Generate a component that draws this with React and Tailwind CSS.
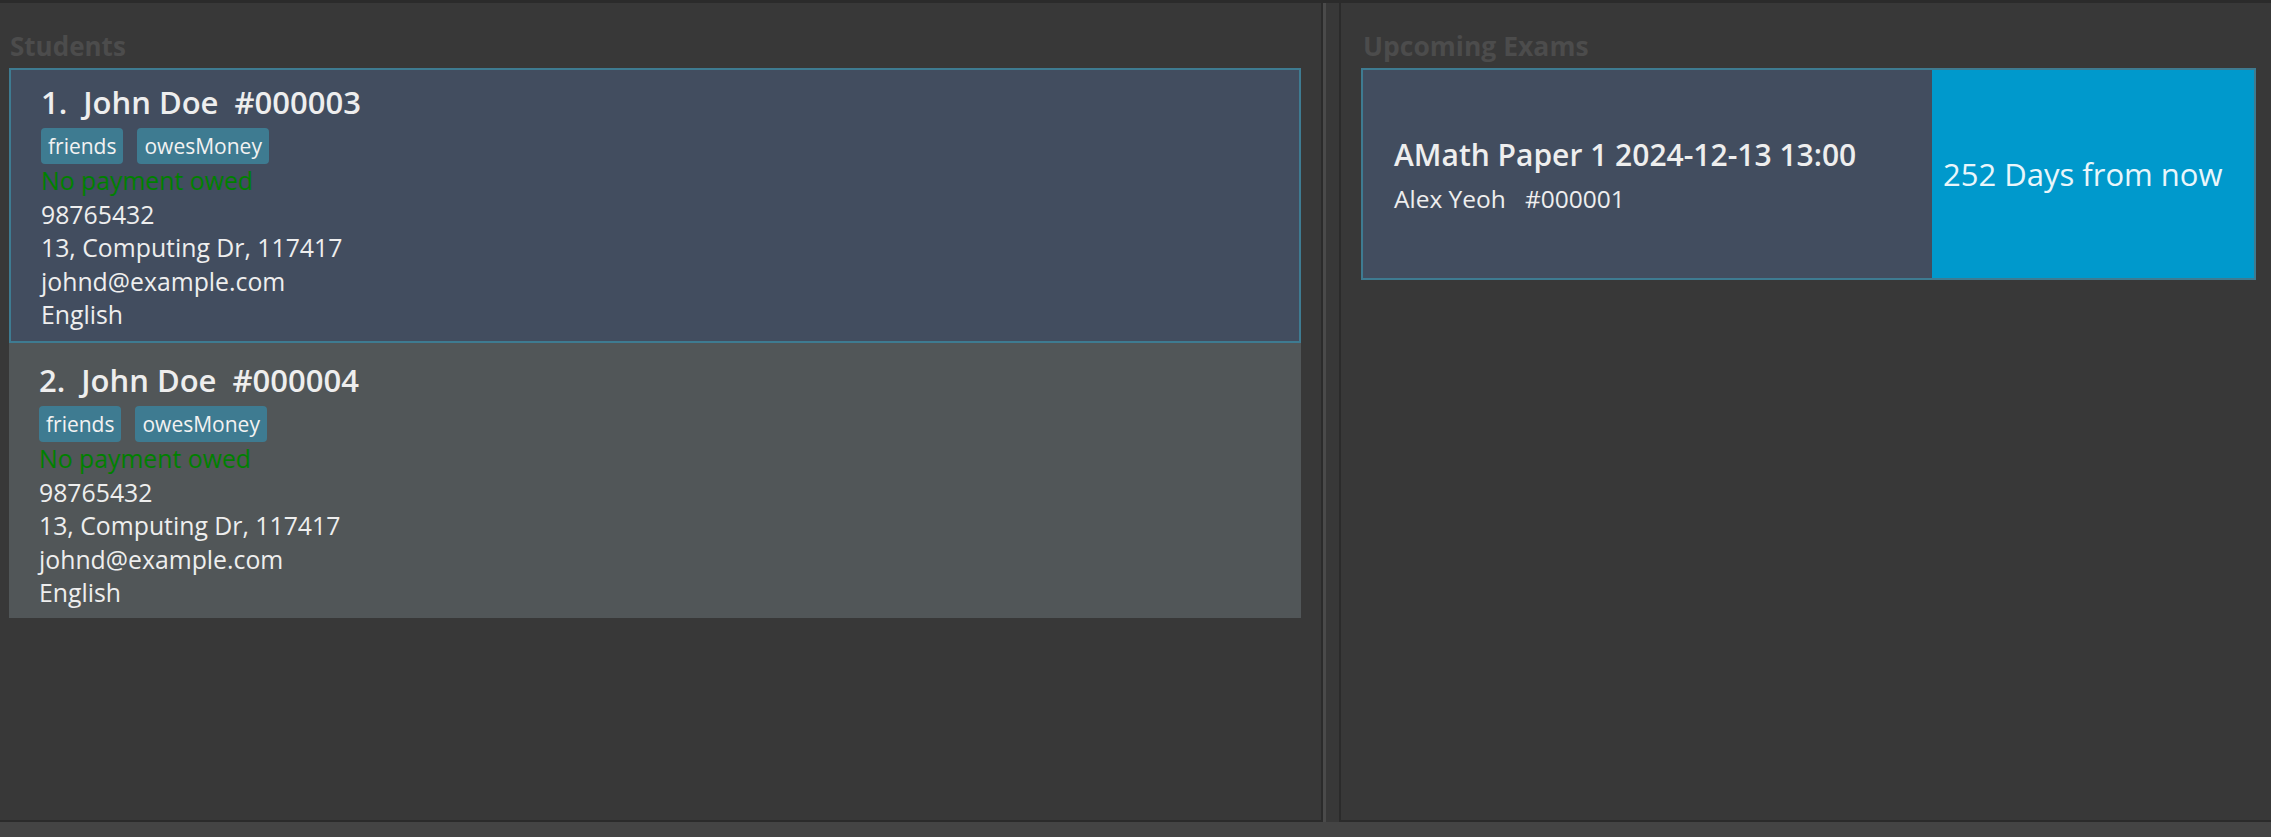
const students = [
  {
    index: 1,
    name: "John Doe",
    id: "#000003",
    tags: ["friends", "owesMoney"],
    payment: "No payment owed",
    phone: "98765432",
    address: "13, Computing Dr, 117417",
    email: "johnd@example.com",
    language: "English",
    selected: true,
  },
  {
    index: 2,
    name: "John Doe",
    id: "#000004",
    tags: ["friends", "owesMoney"],
    payment: "No payment owed",
    phone: "98765432",
    address: "13, Computing Dr, 117417",
    email: "johnd@example.com",
    language: "English",
    selected: false,
  },
];

const StudentCard = ({ student }) => (
  <div
    className={
      student.selected
        ? "h-[275px] border-2 border-[#3e7b91] bg-[#424d5f] pl-[30px] pt-[12px]"
        : "h-[275px] bg-[#515658] pl-[30px] pt-[17px]"
    }
  >
    <div className="whitespace-pre text-[31px] font-semibold leading-[40px] text-[#eeeeee]">
      {`${student.index}.  ${student.name}  ${student.id}`}
    </div>
    <div className="mt-[6px] flex gap-[14px]">
      {student.tags.map((tag) => (
        <span
          key={tag}
          className="h-[36px] rounded-[4px] bg-[#3e7b91] px-[7px] text-[21px] leading-[36px] text-[#f2f2f2]"
        >
          {tag}
        </span>
      ))}
    </div>
    <div className="text-[24.8px] leading-[33.6px] text-[#eeeeee]">
      <div className="text-[#008000]">{student.payment}</div>
      <div>{student.phone}</div>
      <div>{student.address}</div>
      <div>{student.email}</div>
      <div>{student.language}</div>
    </div>
  </div>
);

export default function App() {
  return (
    <div className="flex h-[837px] flex-col bg-[#383838] font-['Open_Sans',sans-serif]">
      <div className="h-[3px] bg-[#2b2b2b]" />

      <div className="flex min-h-0 flex-1">
        {/* Students */}
        <section className="w-[1323px] border-r-2 border-b-2 border-[#2b2b2b] pl-[9px] pr-[20px]">
          <h2 className="h-[65px] pl-px pt-[25px] text-[26px] font-bold leading-[36px] text-[#4c4c4c]">
            Students
          </h2>
          <div className="flex flex-col">
            {students.map((s) => (
              <StudentCard key={s.id} student={s} />
            ))}
          </div>
        </section>

        {/* splitter */}
        <div className="w-[16px] border-l-[3px] border-[#4a4a4a]" />

        {/* Upcoming exams */}
        <section className="flex-1 border-l-2 border-b-2 border-[#2b2b2b] pl-[20px] pr-[15px]">
          <h2 className="h-[65px] pl-[2px] pt-[25px] text-[26.5px] font-bold leading-[36px] text-[#4c4c4c]">
            Upcoming Exams
          </h2>
          <div className="flex h-[212px] border-2 border-[#3e7b91]">
            <div className="flex flex-1 flex-col justify-center bg-[#424d5f] px-[31px] pt-[4px] text-[#eeeeee]">
              <div className="text-[30px] font-semibold leading-[40px]">AMath Paper 1 2024-12-13 13:00</div>
              <div className="mt-[6px] whitespace-pre text-[24.5px] leading-[36px]">{"Alex Yeoh   #000001"}</div>
            </div>
            <div className="flex w-[322px] items-center bg-[#0099cc] pl-[11px] text-[31px] text-[#e9f6fb]">
              252 Days from now
            </div>
          </div>
        </section>
      </div>

      <div className="h-[15px] bg-[#444444]" />
    </div>
  );
}
